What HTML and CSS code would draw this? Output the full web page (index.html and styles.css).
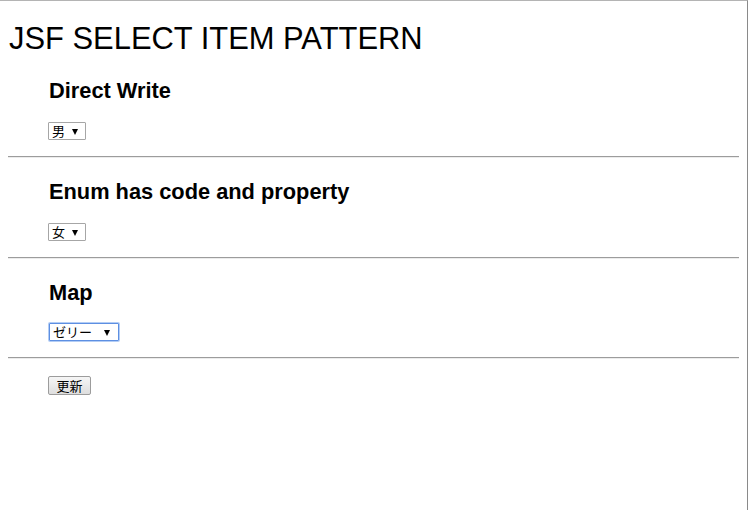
FILE: index.html
```html
<!DOCTYPE html>
<html lang="ja">
<head>
<meta charset="utf-8">
<title>JSF SELECT ITEM PATTERN</title>
<link rel="stylesheet" href="styles.css">
</head>
<body>
<h1 class="title">JSF SELECT ITEM PATTERN</h1>
<form class="form">
  <section class="section">
    <h3 class="section-title">Direct Write</h3>
    <span class="select">
      <select class="select-input"><option>男</option><option>女</option></select>
    </span>
  </section>
  <hr class="rule">
  <section class="section">
    <h3 class="section-title">Enum has code and property</h3>
    <span class="select">
      <select class="select-input"><option>女</option><option>男</option></select>
    </span>
  </section>
  <hr class="rule">
  <section class="section">
    <h3 class="section-title">Map</h3>
    <span class="select select-focused select-wide">
      <select class="select-input"><option>ゼリー</option></select>
    </span>
  </section>
  <hr class="rule">
  <div class="actions">
    <button type="button" class="button">更新</button>
  </div>
</form>
</body>
</html>
```

FILE: styles.css
```css
html {
  border-top: 1px solid #b4b4b4;
  border-right: 1px solid #8a8a8a;
  min-height: 509px;
  background: #fff;
}
body {
  margin: 0 8px;
  font-family: "Liberation Sans", Arial, "Noto Sans CJK JP", sans-serif;
  color: #000;
}
.title {
  margin: 0;
  padding: 21px 0 0 1px;
  font-size: 30.9px;
  font-weight: normal;
  line-height: 34px;
}
.form {
  display: block;
  margin-top: 1px;
}
.section {
  display: flex;
  flex-direction: column;
  align-items: flex-start;
  gap: 19px;
  padding: 21px 0 16px 40px;
}
.section-title {
  margin: 0 0 0 1px;
  font-size: 21.8px;
  font-weight: bold;
  line-height: 25px;
}
.rule {
  margin: 0;
  height: 0;
  border: 0;
  border-top: 1px solid #9c9c9c;
  border-bottom: 1px solid #ececec;
}
.select {
  position: relative;
  display: inline-block;
  width: 38px;
  height: 18px;
  box-sizing: border-box;
  border: 1px solid #a6a6a6;
  border-radius: 1px;
  background: #fff;
}
.select::after {
  content: "";
  position: absolute;
  right: 7px;
  top: 6px;
  border-left: 3.5px solid transparent;
  border-right: 3.5px solid transparent;
  border-top: 6px solid #000;
  pointer-events: none;
}
.select-wide {
  width: 70px;
  margin: -1px 0 0 1px;
}
.select-wide::after {
  right: 8px;
}
.select-focused {
  border-color: #5d8fe2;
  box-shadow: 0 0 0 1px #b3cdf5;
}
.select-input {
  appearance: none;
  -webkit-appearance: none;
  display: block;
  width: 100%;
  height: 100%;
  margin: 0;
  padding: 0 0 0 3px;
  border: 0;
  background: transparent;
  font-family: "Noto Sans CJK JP", sans-serif;
  font-size: 13px;
  line-height: 16px;
  color: #000;
  outline: none;
}
.actions {
  padding: 17px 0 0 40px;
}
.button {
  display: block;
  width: 43px;
  height: 19px;
  margin: 0;
  padding: 0;
  box-sizing: border-box;
  border: 1px solid #9c9c9c;
  border-radius: 2px;
  background: linear-gradient(#f6f6f6, #dedede);
  font-family: "Noto Sans CJK JP", sans-serif;
  font-size: 13px;
  line-height: 16px;
  color: #000;
}
```
